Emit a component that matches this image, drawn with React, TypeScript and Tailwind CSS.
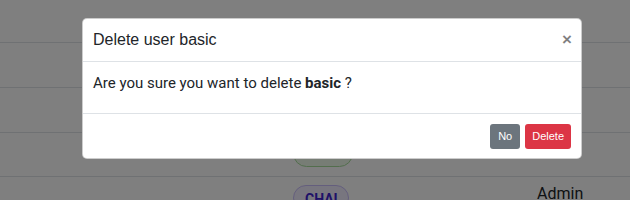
import React from "react";

export default function App() {
  return (
    <div className="relative h-[200px] w-[630px] overflow-hidden bg-white font-['Roboto',Arial,sans-serif] text-[#212529]">
      {/* underlying table */}
      <div className="flex flex-col">
        <div className="h-[43px] border-b border-[#dee2e6]" />
        <div className="h-[45px] border-b border-[#dee2e6]" />
        <div className="h-[45px] border-b border-[#dee2e6]" />
        <div className="grid h-[44px] grid-cols-[293px_244px_1fr] border-b border-[#dee2e6]">
          <div />
          <div className="pt-[7px]">
            <span className="block h-[27px] w-[60px] rounded-full border border-[#a6dc9b] bg-[#eefaea]" />
          </div>
          <div />
        </div>
        <div className="grid h-[45px] grid-cols-[293px_244px_1fr]">
          <div />
          <div className="pt-[8px]">
            <span className="flex h-[26px] w-[56px] items-start justify-start rounded-full border border-[#c9bdfb] bg-[#f1edff] pl-[11px] pt-[5px] text-[14px] font-bold leading-[16px] text-[#3d22d0]">
              CHAI
            </span>
          </div>
          <div className="pt-[5px] text-[16px] leading-[24px]">Admin</div>
        </div>
      </div>

      {/* backdrop */}
      <div className="absolute inset-0 bg-black/50" />

      {/* modal */}
      <div className="absolute left-[82px] top-[18px] w-[500px] rounded-[5px] border border-black/20 bg-white">
        <div className="flex items-start justify-between border-b border-[#dee2e6] px-[10px] py-[9px]">
          <h5 className="font-['Liberation_Sans',Arial,sans-serif] text-[16px] font-normal leading-[24px] text-[#212529]">
            Delete user basic
          </h5>
          <button className="mt-[4px] -mr-[1px] font-['Liberation_Sans',Arial,sans-serif] text-[17px] font-bold leading-[16px] text-black/50">
            ×
          </button>
        </div>
        <div className="px-[10px] pb-[18px] pt-[9px] text-[15px] leading-[24px]">
          Are you sure you want to delete <b className="font-bold">basic</b> ?
        </div>
        <div className="flex justify-end gap-[5px] border-t border-[#dee2e6] pb-[9px] pl-[10px] pr-[10px] pt-[10px]">
          <button className="h-[25px] rounded-[3px] bg-[#6c757d] px-[8px] font-['Liberation_Sans',Arial,sans-serif] text-[11px] text-white">
            No
          </button>
          <button className="h-[25px] rounded-[3px] bg-[#dc3545] px-[7px] font-['Liberation_Sans',Arial,sans-serif] text-[11px] text-white">
            Delete
          </button>
        </div>
      </div>
    </div>
  );
}
